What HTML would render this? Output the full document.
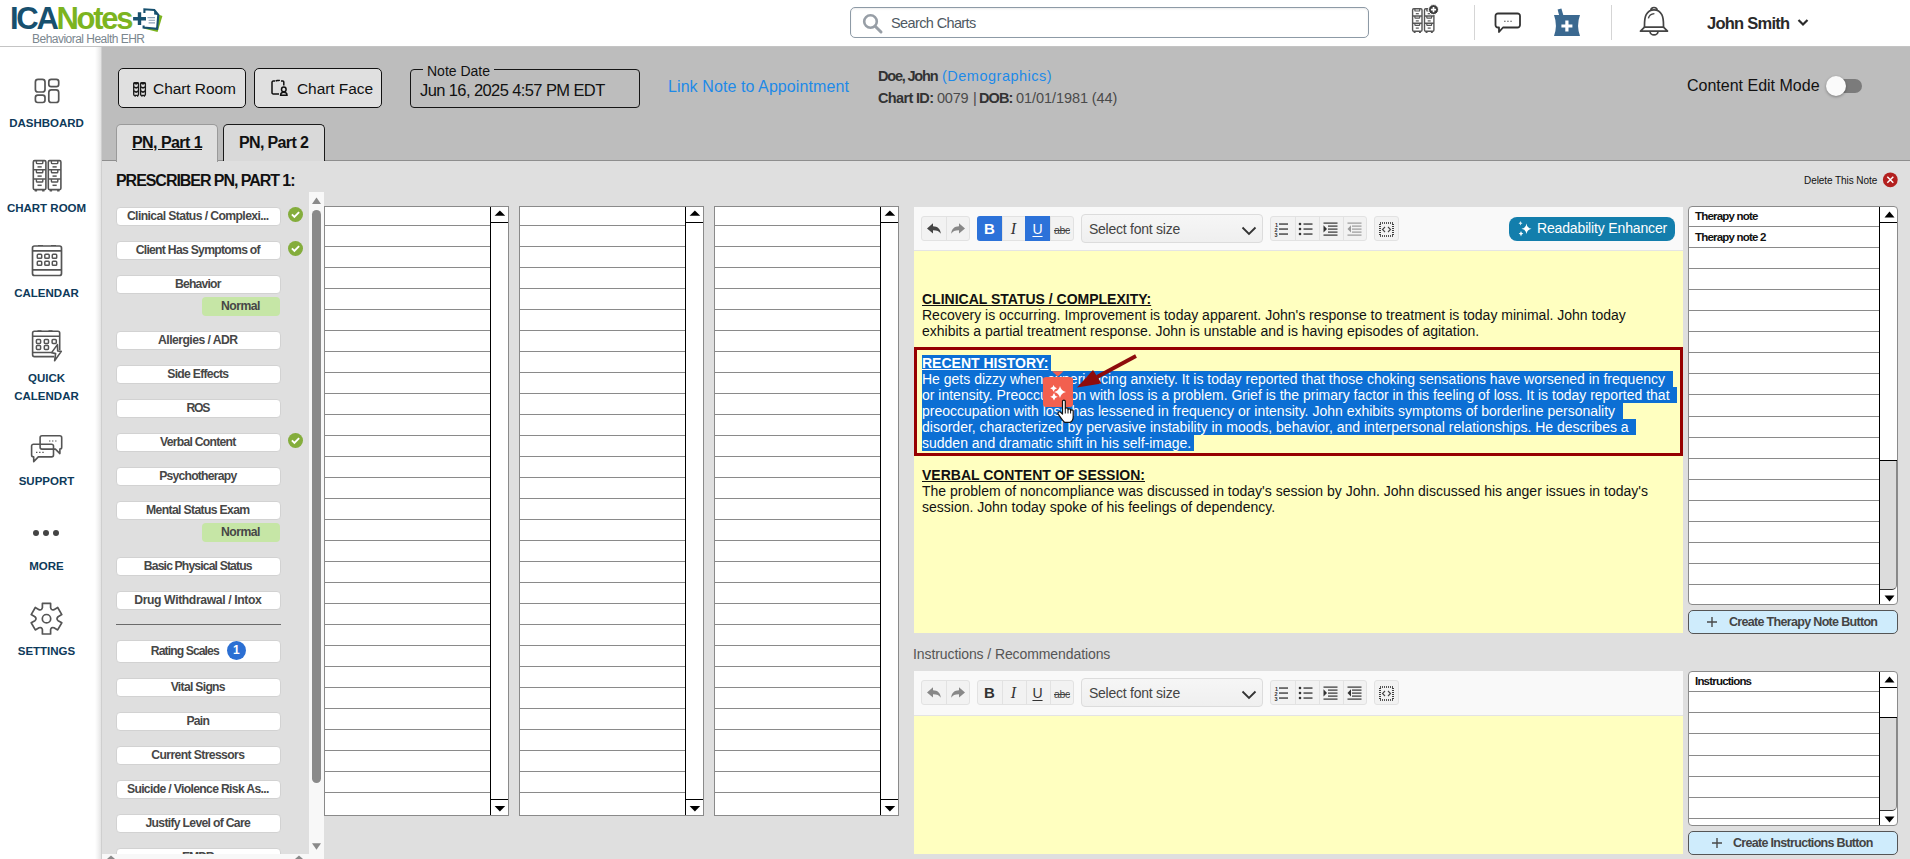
<!DOCTYPE html>
<html><head><meta charset="utf-8">
<style>
*{box-sizing:border-box}
html,body{margin:0;padding:0}
body{width:1910px;height:859px;overflow:hidden;position:relative;background:#dfdfdf;font-family:"Liberation Sans",sans-serif;color:#222}
.a{position:absolute}
.nw{white-space:nowrap}
#hdr{left:0;top:0;width:1910px;height:47px;background:#fff;border-bottom:1px solid #c4c4c4}
#side{left:0;top:47px;width:102px;height:812px;background:linear-gradient(to right,#fff 0,#fff 95px,#f3f3f3 98px,#e4e4e4 101px,#cfcfcf 101px);z-index:3}
#band{left:100px;top:47px;width:1810px;height:114px;background:#bdbdbd;border-bottom:1px solid #8e8e8e}
.navl{left:0;width:93px;text-align:center;font-weight:bold;font-size:11.5px;color:#0e3a5a;line-height:14px}
.li{left:14px;width:165px;background:#fff;border:1px solid #d2d2d2;border-radius:4px}
.lit{font-size:12.2px;font-weight:bold;color:#474747;line-height:15px}
.grid{background:#fff;border:1px solid #8a8a8a}
.tb{background:#f9f9f9}
.grp{background:#f2f2f2;border:1px solid #e2e2e2;border-radius:3px}
.sep{top:0;width:1px;height:23px;background:#e2e2e2}
.sel{background:linear-gradient(#f6f6f6,#efefef);border:1px solid #dcdcdc;border-radius:4px}
.yel{background:#ffffc0}
.etx{font-size:14px;line-height:16px;color:#111}
.hl{background:#0c6fd4;color:#fff}
.rp{background:#fff;border:1px solid #8a8a8a;border-radius:4px}
.cbtn{background:#cfecfc;border:1px solid #555;border-radius:5px}
.cbt{font-size:12.5px;font-weight:bold;color:#444;line-height:15px}
.btn{background:#e0e0e0;border:1.6px solid #111;border-radius:5px}
</style></head><body>

<!-- HEADER -->
<div id="hdr" class="a">
  <div class="a nw" style="left:10px;top:1px;font-weight:bold;font-size:31px;letter-spacing:-2.3px;line-height:36px;"><span style="color:#17506e">ICA</span><span style="color:#7cb41f">Notes</span></div>
  <svg class="a" style="left:130px;top:6px" width="36" height="30" viewBox="130 6 36 30">
    <path d="M143.6 28.4L157.6 32L162.4 16L158.3 14.6Z" fill="#7cb41f"/>
    <path d="M144.6 9.3L154.3 10L158.3 14.9L157.1 28.9L143.6 27.5Z" fill="#fff"/>
    <path d="M144.4 13V9.3L154.3 10L158.3 14.9L157.1 28.9L143.6 27.6V25.6" fill="none" stroke="#17506e" stroke-width="2.1"/>
    <path d="M154.3 10L154.1 14.6L158.3 14.9Z" fill="#17506e"/>
    <path d="M147.5 17.6H155M148.6 20.3H155M148.6 22.9H155" stroke="#8ba0b6" stroke-width="1.1"/>
    <path d="M139.5 12.3V25.1M133.1 18.7H146" stroke="#17506e" stroke-width="3.4"/>
  </svg>
  <div class="a nw" style="left:32px;top:32px;font-size:12px;color:#7b878f;letter-spacing:-.52px">Behavioral Health EHR</div>

  <!-- search -->
  <div class="a" style="left:850px;top:7px;width:519px;height:31px;border:1.5px solid #8d9aa6;border-radius:5px;background:#fff;box-shadow:inset 0 1px 2px rgba(0,0,0,.08)"></div>
  <svg class="a" style="left:862px;top:13px" width="22" height="22" viewBox="0 0 22 22"><circle cx="8.5" cy="8.5" r="6.3" fill="none" stroke="#979ea6" stroke-width="2.6"/><path d="M13.2 13.2 L19 19" stroke="#979ea6" stroke-width="3" stroke-linecap="round"/></svg>
  <div class="a nw" style="left:891px;top:15px;font-size:14.5px;color:#4f5963;letter-spacing:-.62px">Search Charts</div>

  <!-- icons -->
  <!-- chart room + -->
  <svg class="a" style="left:1408px;top:3px" width="34" height="32" viewBox="1408 3 34 32"><g fill="none" stroke="#555" stroke-width="1.4">
    <rect x="1412.6" y="8.8" width="9.4" height="22.4" rx="1.2"/><path d="M1412.6 16H1422.0M1412.6 23.2H1422.0"/><path d="M1414.8999999999999 8.8V10.4A.6 .6 0 0 0 1415.4999999999998 11.0H1419.1000000000001A.6 .6 0 0 0 1419.7 10.4V8.8" stroke-width="1.2"/><path d="M1415.8 13.700000000000001H1418.8" stroke-width="1.2"/><path d="M1414.8999999999999 16V17.6A.6 .6 0 0 0 1415.4999999999998 18.2H1419.1000000000001A.6 .6 0 0 0 1419.7 17.6V16" stroke-width="1.2"/><path d="M1415.8 20.9H1418.8" stroke-width="1.2"/><path d="M1414.8999999999999 23.2V24.8A.6 .6 0 0 0 1415.4999999999998 25.4H1419.1000000000001A.6 .6 0 0 0 1419.7 24.8V23.2" stroke-width="1.2"/><path d="M1415.8 28.1H1418.8" stroke-width="1.2"/><path d="M1413.6999999999998 32.1H1415.6M1419.0 32.1H1420.9" stroke-width="1.6"/><rect x="1424.5" y="8.8" width="9.4" height="22.4" rx="1.2"/><path d="M1424.5 16H1433.9M1424.5 23.2H1433.9"/><path d="M1426.8 8.8V10.4A.6 .6 0 0 0 1427.3999999999999 11.0H1431.0000000000002A.6 .6 0 0 0 1431.6000000000001 10.4V8.8" stroke-width="1.2"/><path d="M1427.7 13.700000000000001H1430.7" stroke-width="1.2"/><path d="M1426.8 16V17.6A.6 .6 0 0 0 1427.3999999999999 18.2H1431.0000000000002A.6 .6 0 0 0 1431.6000000000001 17.6V16" stroke-width="1.2"/><path d="M1427.7 20.9H1430.7" stroke-width="1.2"/><path d="M1426.8 23.2V24.8A.6 .6 0 0 0 1427.3999999999999 25.4H1431.0000000000002A.6 .6 0 0 0 1431.6000000000001 24.8V23.2" stroke-width="1.2"/><path d="M1427.7 28.1H1430.7" stroke-width="1.2"/><path d="M1425.6 32.1H1427.5M1430.9 32.1H1432.8000000000002" stroke-width="1.6"/></g>
    <circle cx="1433.5" cy="9.6" r="5" fill="#3a3a3a" stroke="#fff" stroke-width="1"/>
    <path d="M1433.5 7V12.2M1430.9 9.6H1436.1" stroke="#fff" stroke-width="1.7"/>
  </svg>
  <!-- chat -->
  <svg class="a" style="left:1493.6px;top:12px" width="28" height="22" viewBox="0 0 28 22">
    <path d="M4 1.5H23.5A2.5 2.5 0 0 1 26 4V13A2.5 2.5 0 0 1 23.5 15.5H9L5 20V15.5H4A2.5 2.5 0 0 1 1.5 13V4A2.5 2.5 0 0 1 4 1.5Z" fill="none" stroke="#333" stroke-width="1.8" stroke-linejoin="round"/>
    <path d="M10.2 9.3H11.5M13.3 9.3H14.6M16.4 9.3H17.7" stroke="#333" stroke-width="1.1"/>
  </svg>
  <!-- pharmacy -->
  <svg class="a" style="left:1553px;top:8px" width="28" height="29" viewBox="0 0 28 29">
    <path d="M4.6 1.6L8.4 0.6L10.4 7.5H6.2Z" fill="#3b6990"/>
    <path d="M1 7H27Q23.2 17.5 27 28H1Q4.8 17.5 1 7Z" fill="#3b6990"/>
    <path d="M13.9 12.6V23.4M8.4 18H19.4" stroke="#fff" stroke-width="3.2"/>
  </svg>
  <!-- bell -->
  <svg class="a" style="left:1638px;top:5.5px" width="32" height="31" viewBox="0 0 32 31">
    <g fill="none" stroke="#444" stroke-width="1.7" stroke-linejoin="round">
      <path d="M12.9 4.4A3.1 2.9 0 0 1 19.1 4.4"/>
      <path d="M6.5 21.2C6.5 15 6.3 12 8.2 8.6C10 5.3 13 3.8 16 3.8C19 3.8 22 5.3 23.8 8.6C25.7 12 25.5 15 25.5 21.2"/>
      <path d="M6.5 21.2H25.5L29.5 25.2H2.5Z"/>
      <path d="M12 25.4A4 3.4 0 0 0 20 25.4"/>
      <path d="M10.4 12.3C11 9.4 13.2 7.9 16.4 7.6" stroke-width="1.4"/>
    </g>
  </svg>
  <div class="a" style="left:1474px;top:5px;width:1px;height:35px;background:#d5d5d5"></div>
  <div class="a" style="left:1611px;top:5px;width:1px;height:35px;background:#d5d5d5"></div>
  <div class="a nw" style="left:1707px;top:14px;font-weight:bold;font-size:16.5px;color:#2a2a2a;letter-spacing:-.75px">John Smith</div>
  <svg class="a" style="left:1797px;top:18px" width="12" height="9" viewBox="0 0 12 9"><path d="M1.5 2 L6 6.5 L10.5 2" fill="none" stroke="#2a2a2a" stroke-width="2.2"/></svg>
</div>

<!-- SIDEBAR -->
<div id="side" class="a">
  <!-- dashboard -->
  <svg class="a" style="left:30px;top:27px" width="34" height="32" viewBox="30 74 34 32"><g fill="none" stroke="#555" stroke-width="1.7">
    <rect x="35.4" y="79.3" width="9.6" height="12.7" rx="2.6"/><rect x="35.4" y="95.1" width="9.6" height="7.4" rx="2.4"/>
    <rect x="48.8" y="79.3" width="9.9" height="7.3" rx="2.4"/><rect x="48.8" y="89.9" width="9.9" height="12.6" rx="2.6"/></g></svg>
  <div class="a nav navl nw" style="top:69px">DASHBOARD</div>
  <!-- chart room -->
  <svg class="a" style="left:30px;top:110px" width="34" height="36" viewBox="30 157 34 36"><g fill="none" stroke="#555" stroke-width="1.6">
    <rect x="33.3" y="160.6" width="12.6" height="29" rx="1.3"/><path d="M33.3 169.8H45.9M33.3 179H45.9"/><path d="M36.4 160.6V162.79999999999998A.8 .8 0 0 0 37.199999999999996 163.6H42.0A.8 .8 0 0 0 42.8 162.79999999999998V160.6" stroke-width="1.4"/><path d="M37.5 166.9H41.699999999999996" stroke-width="1.5"/><path d="M36.4 169.8V172.0A.8 .8 0 0 0 37.199999999999996 172.8H42.0A.8 .8 0 0 0 42.8 172.0V169.8" stroke-width="1.4"/><path d="M37.5 176.10000000000002H41.699999999999996" stroke-width="1.5"/><path d="M36.4 179V181.2A.8 .8 0 0 0 37.199999999999996 182H42.0A.8 .8 0 0 0 42.8 181.2V179" stroke-width="1.4"/><path d="M37.5 185.3H41.699999999999996" stroke-width="1.5"/><path d="M34.699999999999996 190.6H37.099999999999994M42.1 190.6H44.5" stroke-width="1.9"/><rect x="48.3" y="160.6" width="12.6" height="29" rx="1.3"/><path d="M48.3 169.8H60.9M48.3 179H60.9"/><path d="M51.4 160.6V162.79999999999998A.8 .8 0 0 0 52.199999999999996 163.6H57.0A.8 .8 0 0 0 57.8 162.79999999999998V160.6" stroke-width="1.4"/><path d="M52.5 166.9H56.699999999999996" stroke-width="1.5"/><path d="M51.4 169.8V172.0A.8 .8 0 0 0 52.199999999999996 172.8H57.0A.8 .8 0 0 0 57.8 172.0V169.8" stroke-width="1.4"/><path d="M52.5 176.10000000000002H56.699999999999996" stroke-width="1.5"/><path d="M51.4 179V181.2A.8 .8 0 0 0 52.199999999999996 182H57.0A.8 .8 0 0 0 57.8 181.2V179" stroke-width="1.4"/><path d="M52.5 185.3H56.699999999999996" stroke-width="1.5"/><path d="M49.699999999999996 190.6H52.099999999999994M57.1 190.6H59.5" stroke-width="1.9"/></g></svg>
  <div class="a nav navl nw" style="top:153.5px">CHART ROOM</div>
  <!-- calendar -->
  <svg class="a" style="left:30px;top:197px" width="34" height="34" viewBox="0 0 34 34"><g fill="none" stroke="#555" stroke-width="1.7">
    <rect x="2.5" y="2" width="29" height="29.5" rx="2"/><path d="M2.5 6.8H31.5M2.5 25.8H31.5"/>
    <path d="M8 1.5H13M21 1.5H26" stroke-width="1.2"/>
    <rect x="7.3" y="10.3" width="4.4" height="4" rx=".9" stroke-width="1.5"/><rect x="14.8" y="10.3" width="4.4" height="4" rx=".9" stroke-width="1.5"/><rect x="22.3" y="10.3" width="4.4" height="4" rx=".9" stroke-width="1.5"/>
    <rect x="7.3" y="17.3" width="4.4" height="4" rx=".9" stroke-width="1.5"/><rect x="14.8" y="17.3" width="4.4" height="4" rx=".9" stroke-width="1.5"/><rect x="22.3" y="17.3" width="4.4" height="4" rx=".9" stroke-width="1.5"/></g></svg>
  <div class="a nav navl nw" style="top:239px">CALENDAR</div>
  <!-- quick calendar -->
  <svg class="a" style="left:29px;top:281px" width="36" height="36" viewBox="29 328 36 36"><g fill="none" stroke="#555" stroke-width="1.6" stroke-linejoin="round">
    <path d="M54.2 356.6H34.4A1.8 1.8 0 0 1 32.6 354.8V333.1A1.8 1.8 0 0 1 34.4 331.3H57.9A1.8 1.8 0 0 1 59.7 333.1V350.3"/>
    <path d="M32.6 336.3H59.7M32.6 352.5H51.5"/>
    <path d="M37.5 330.9H41.5M48.5 330.9H52.5" stroke-width="1.2"/>
    <rect x="36.4" y="339.6" width="4.2" height="3.8" rx=".9" stroke-width="1.5"/><rect x="44.3" y="339.6" width="4.2" height="3.8" rx=".9" stroke-width="1.5"/><rect x="52.1" y="339.6" width="4.2" height="3.8" rx=".9" stroke-width="1.5"/><rect x="36.4" y="345.6" width="4.2" height="3.8" rx=".9" stroke-width="1.5"/><rect x="44.3" y="345.6" width="4.2" height="3.8" rx=".9" stroke-width="1.5"/>
    <path d="M57.4 344.6L51.6 352.6L55.6 353.6L54.6 360.8L61.3 351.4L57.7 351Z" fill="#fff"/></g></svg>
  <div class="a nav navl nw" style="top:324px">QUICK</div>
  <div class="a nav navl nw" style="top:341.5px">CALENDAR</div>
  <!-- support -->
  <svg class="a" style="left:28px;top:384px" width="38" height="34" viewBox="28 431 38 34"><g fill="none" stroke="#555" stroke-width="1.6" stroke-linejoin="round">
    <path d="M42 435.8H59.8A1.9 1.9 0 0 1 61.7 437.7V447.2A1.9 1.9 0 0 1 59.8 449.1H59.9V453.6L55.4 449.1H42A1.9 1.9 0 0 1 40.1 447.2V437.7A1.9 1.9 0 0 1 42 435.8Z"/>
    <path d="M33.5 444.2H51.6A1.9 1.9 0 0 1 53.5 446.1V455A1.9 1.9 0 0 1 51.6 456.9H38.3L33.7 461.6V456.9H33.5A1.9 1.9 0 0 1 31.6 455V446.1A1.9 1.9 0 0 1 33.5 444.2Z"/>
    <path d="M49 441H50.4M52 441H53.4M55.1 441H56.5M36 452.4H37.4M39.1 452.4H40.5M42.3 452.4H43.7" stroke-width="1.2"/></g></svg>
  <div class="a nav navl nw" style="top:427px">SUPPORT</div>
  <!-- more -->
  <svg class="a" style="left:32px;top:482px" width="30" height="8" viewBox="0 0 30 8"><circle cx="4" cy="4" r="3" fill="#444"/><circle cx="14" cy="4" r="3" fill="#444"/><circle cx="24" cy="4" r="3" fill="#444"/></svg>
  <div class="a nav navl nw" style="top:511.5px">MORE</div>
  <!-- settings -->
  <svg class="a" style="left:28px;top:553px" width="38" height="38" viewBox="28 600 38 38"><g fill="none" stroke="#555" stroke-width="1.7" stroke-linejoin="round">
    <path d="M42.40 607.70L42.40 603.40L50.60 603.40L50.60 607.70Q51.20 610.56 53.98 609.65L57.70 607.50L61.80 614.60L58.08 616.75Q55.90 618.70 58.08 620.65L61.80 622.80L57.70 629.90L53.98 627.75Q51.20 626.84 50.60 629.70L50.60 634.00L42.40 634.00L42.40 629.70Q41.80 626.84 39.02 627.75L35.30 629.90L31.20 622.80L34.92 620.65Q37.10 618.70 34.92 616.75L31.20 614.60L35.30 607.50L39.02 609.65Q41.80 610.56 42.40 607.70Z"/><circle cx="46.5" cy="618.7" r="4.2"/></g></svg>
  <div class="a nav navl nw" style="top:596.5px">SETTINGS</div>
</div>

<!-- GRAY BAND -->
<div id="band" class="a"></div>
<!-- toolbar buttons -->
<div class="a btn" style="left:118px;top:68px;width:128px;height:40px"></div>
<svg class="a" style="left:132px;top:81px" width="16" height="16" viewBox="132 81 16 16"><g fill="none" stroke="#1a1a1a">
  <rect x="133.7" y="82.6" width="4.8" height="12.8" rx="1" stroke-width="1.3"/><rect x="140.6" y="82.6" width="4.8" height="12.8" rx="1" stroke-width="1.3"/>
  <path d="M133.7 82.8L136.1 84L138.5 82.8M133.7 86.8L136.1 88L138.5 86.8M133.7 91L136.1 92.2L138.5 91M140.6 82.8L143 84L145.4 82.8M140.6 86.8L143 88L145.4 86.8M140.6 91L143 92.2L145.4 91" stroke-width="1.5"/>
  <path d="M134.5 96H135.8M137 96H138.2M141.3 96H142.5M143.7 96H145" stroke-width="1.4"/></g></svg>
<div class="a nw" style="left:153px;top:80px;font-size:15.5px;color:#111;letter-spacing:-.06px">Chart Room</div>
<div class="a btn" style="left:254px;top:68px;width:128px;height:40px"></div>
<svg class="a" style="left:270px;top:79px" width="19" height="19" viewBox="270 79 19 19"><g fill="none" stroke="#111" stroke-width="1.5">
  <path d="M279 93.9H273.2A1.2 1.2 0 0 1 272 92.7V82.3A1.2 1.2 0 0 1 273.2 81.1H275"/>
  <path d="M275.6 81.1L277.2 80.5H279.2L279.4 81.1" stroke-width="1.6"/>
  <path d="M281 81.1H282.8A1 1 0 0 1 283.8 82.1V85.6"/>
  <circle cx="283.8" cy="89.4" r="2.3"/>
  <path d="M280.6 95.3C280.6 93.2 281.8 92.3 283.8 92.3C285.8 92.3 287 93.2 287 95.3Z"/></g></svg>
<div class="a nw" style="left:297px;top:80px;font-size:15.5px;color:#111;letter-spacing:-.07px">Chart Face</div>

<!-- note date -->
<div class="a" style="left:410px;top:69px;width:230px;height:39px;border:1.5px solid #161616;border-radius:4px"></div>
<div class="a nw" style="left:423px;top:63px;padding:0 4px;background:#bdbdbd;font-size:14px;color:#111;line-height:16px;letter-spacing:0px">Note Date</div>
<div class="a nw" style="left:420px;top:81px;font-size:16.5px;color:#111;letter-spacing:-.6px">Jun 16, 2025 4:57 PM EDT</div>

<div class="a nw" style="left:668px;top:78px;font-size:16px;color:#1d8ae8;letter-spacing:.09px">Link Note to Appointment</div>

<div class="a nw" style="left:878px;top:68px;font-size:14.5px;line-height:17px;color:#333;font-weight:bold;letter-spacing:-1.2px">Doe, John</div>
<div class="a nw" style="left:942px;top:68px;font-size:14.5px;line-height:17px;color:#1d8ae8;letter-spacing:.5px">(Demographics)</div>
<div class="a nw" style="left:878px;top:90px;font-size:14.5px;line-height:17px;color:#333;font-weight:bold;letter-spacing:-.65px">Chart ID:</div>
<div class="a nw" style="left:937px;top:90px;font-size:14.5px;line-height:17px;color:#4a4a4a;letter-spacing:-.2px">0079</div>
<div class="a nw" style="left:973px;top:90px;font-size:14.5px;line-height:17px;color:#4a4a4a">|</div>
<div class="a nw" style="left:979px;top:90px;font-size:14.5px;line-height:17px;color:#333;font-weight:bold;letter-spacing:-.9px">DOB:</div>
<div class="a nw" style="left:1016px;top:90px;font-size:14.5px;line-height:17px;color:#4a4a4a;letter-spacing:-.07px">01/01/1981 (44)</div>

<div class="a nw" style="left:1687px;top:77px;font-size:16px;color:#111">Content Edit Mode</div>
<div class="a" style="left:1828px;top:79px;width:34px;height:14px;border-radius:7px;background:#7b7b7b"></div>
<div class="a" style="left:1826px;top:75.5px;width:20px;height:20px;border-radius:50%;background:#fafafa;box-shadow:0 1px 3px rgba(0,0,0,.35)"></div>

<!-- tabs -->
<div class="a" style="left:116px;top:124px;width:102px;height:38px;background:#dfdfdf;border:1px solid #9a9a9a;border-bottom:none;border-radius:5px 5px 0 0"></div>
<div class="a nw" style="left:132px;top:134px;font-size:16px;font-weight:bold;color:#111;text-decoration:underline;letter-spacing:-.56px">PN, Part 1</div>
<div class="a" style="left:223px;top:124px;width:102px;height:37px;background:#d9d9d9;border:1.5px solid #1a1a1a;border-bottom:none;border-radius:5px 5px 0 0"></div>
<div class="a nw" style="left:239px;top:134px;font-size:16px;font-weight:bold;color:#111;letter-spacing:-.64px">PN, Part 2</div>

<div class="a nw" style="left:116px;top:172px;font-size:16px;font-weight:bold;color:#111;letter-spacing:-1.05px">PRESCRIBER PN, PART 1:</div>
<div class="a nw" style="left:1804px;top:175px;font-size:10px;line-height:12px;color:#111;letter-spacing:-.07px">Delete This Note</div>
<svg class="a" style="left:1882px;top:172px" width="16" height="16" viewBox="0 0 16 16"><circle cx="8.3" cy="7.8" r="7.4" fill="#b3201f"/><path d="M5.3 4.8L11.3 10.8M11.3 4.8L5.3 10.8" stroke="#fff" stroke-width="1.5"/></svg>


<!--LIST-->
<div class="a" style="left:102px;top:161px;width:207px;height:693px;overflow:hidden">
<div class="a li" style="top:46px;height:19px"></div>
<div class="a nw lit" style="left:13.8px;width:164px;top:48px;text-align:center;letter-spacing:-0.601px">Clinical Status / Complexi...</div>
<svg class="a" style="left:186px;top:45.5px" width="15" height="15" viewBox="0 0 15 15"><circle cx="7.5" cy="7.5" r="7.5" fill="#84ad3c"/><path d="M3.9 7.4L6.4 9.9L11.1 5.2" fill="none" stroke="#fff" stroke-width="1.9"/></svg>
<div class="a li" style="top:80px;height:19px"></div>
<div class="a nw lit" style="left:13.8px;width:164px;top:82px;text-align:center;letter-spacing:-0.724px">Client Has Symptoms of</div>
<svg class="a" style="left:186px;top:79.5px" width="15" height="15" viewBox="0 0 15 15"><circle cx="7.5" cy="7.5" r="7.5" fill="#84ad3c"/><path d="M3.9 7.4L6.4 9.9L11.1 5.2" fill="none" stroke="#fff" stroke-width="1.9"/></svg>
<div class="a li" style="top:114px;height:19px"></div>
<div class="a nw lit" style="left:13.8px;width:164px;top:116px;text-align:center;letter-spacing:-0.801px">Behavior</div>
<div class="a" style="left:100px;top:136px;width:78px;height:19px;background:#c6e6a6;border-radius:4px"></div>
<div class="a nw lit" style="left:99px;width:79px;top:138px;text-align:center;letter-spacing:-0.505px">Normal</div>
<div class="a li" style="top:170px;height:19px"></div>
<div class="a nw lit" style="left:13.8px;width:164px;top:172px;text-align:center;letter-spacing:-0.539px">Allergies / ADR</div>
<div class="a li" style="top:204px;height:19px"></div>
<div class="a nw lit" style="left:13.8px;width:164px;top:206px;text-align:center;letter-spacing:-0.720px">Side Effects</div>
<div class="a li" style="top:238px;height:19px"></div>
<div class="a nw lit" style="left:13.8px;width:164px;top:240px;text-align:center;letter-spacing:-1.312px">ROS</div>
<div class="a li" style="top:272px;height:19px"></div>
<div class="a nw lit" style="left:13.8px;width:164px;top:274px;text-align:center;letter-spacing:-0.738px">Verbal Content</div>
<svg class="a" style="left:186px;top:271.5px" width="15" height="15" viewBox="0 0 15 15"><circle cx="7.5" cy="7.5" r="7.5" fill="#84ad3c"/><path d="M3.9 7.4L6.4 9.9L11.1 5.2" fill="none" stroke="#fff" stroke-width="1.9"/></svg>
<div class="a li" style="top:306px;height:19px"></div>
<div class="a nw lit" style="left:13.8px;width:164px;top:308px;text-align:center;letter-spacing:-0.774px">Psychotherapy</div>
<div class="a li" style="top:340px;height:19px"></div>
<div class="a nw lit" style="left:13.8px;width:164px;top:342px;text-align:center;letter-spacing:-0.648px">Mental Status Exam</div>
<div class="a" style="left:100px;top:362px;width:78px;height:19px;background:#c6e6a6;border-radius:4px"></div>
<div class="a nw lit" style="left:99px;width:79px;top:364px;text-align:center;letter-spacing:-0.505px">Normal</div>
<div class="a li" style="top:396px;height:19px"></div>
<div class="a nw lit" style="left:13.8px;width:164px;top:398px;text-align:center;letter-spacing:-0.863px">Basic Physical Status</div>
<div class="a li" style="top:430px;height:19px"></div>
<div class="a nw lit" style="left:13.8px;width:164px;top:432px;text-align:center;letter-spacing:-0.384px">Drug Withdrawal / Intox</div>
<div class="a li" style="top:479px;height:23px"></div>
<div class="a nw lit" style="left:48.80000000000001px;top:483px;letter-spacing:-0.916px">Rating Scales</div>
<div class="a" style="left:124.9px;top:480px;width:19px;height:19px;border-radius:50%;background:#2b6fd3;color:#fff;font-weight:bold;font-size:12px;line-height:19px;text-align:center">1</div>
<div class="a li" style="top:517px;height:19px"></div>
<div class="a nw lit" style="left:13.8px;width:164px;top:519px;text-align:center;letter-spacing:-0.714px">Vital Signs</div>
<div class="a li" style="top:551px;height:19px"></div>
<div class="a nw lit" style="left:13.8px;width:164px;top:553px;text-align:center;letter-spacing:-0.773px">Pain</div>
<div class="a li" style="top:585px;height:19px"></div>
<div class="a nw lit" style="left:13.8px;width:164px;top:587px;text-align:center;letter-spacing:-0.620px">Current Stressors</div>
<div class="a li" style="top:619px;height:19px"></div>
<div class="a nw lit" style="left:13.8px;width:164px;top:621px;text-align:center;letter-spacing:-0.672px">Suicide / Violence Risk As...</div>
<div class="a li" style="top:653px;height:19px"></div>
<div class="a nw lit" style="left:13.8px;width:164px;top:655px;text-align:center;letter-spacing:-0.697px">Justify Level of Care</div>
<div class="a li" style="top:687px;height:19px"></div>
<div class="a nw lit" style="left:13.8px;width:164px;top:689px;text-align:center;letter-spacing:-1.078px">EMDR</div>
<div class="a" style="left:14px;top:463px;width:165px;height:1px;background:#6a6a6a"></div>
</div>
<div class="a" style="left:309px;top:192px;width:15px;height:667px;background:#f8f8f8"></div>
<svg class="a" style="left:311px;top:196px" width="11" height="9" viewBox="0 0 11 9"><path d="M1 8L5.5 1.5L10 8Z" fill="#8a8a8a"/></svg>
<div class="a" style="left:312px;top:210px;width:9px;height:573px;border-radius:5px;background:#8a8a8a"></div>
<svg class="a" style="left:311px;top:842px" width="11" height="9" viewBox="0 0 11 9"><path d="M1 1.2L5.5 7.8L10 1.2Z" fill="#8a8a8a"/></svg>
<div class="a" style="left:102px;top:854px;width:207px;height:5px;background:#f8f8f8"></div>
<svg class="a" style="left:106px;top:855px" width="10" height="4" viewBox="0 0 10 4"><path d="M1 4L5 0.5L9 4Z" fill="#8a8a8a"/></svg>
<svg class="a" style="left:294px;top:855px" width="10" height="4" viewBox="0 0 10 4"><path d="M1 4L5 0.5L9 4Z" fill="#8a8a8a"/></svg>
<!--/LIST-->
<!--MAIN-->
<div class="a grid" style="left:324px;top:206px;width:185px;height:610px">
<div class="a" style="left:0;top:18px;width:166px;height:1px;background:#8a8a8a"></div>
<div class="a" style="left:0;top:39px;width:166px;height:1px;background:#8a8a8a"></div>
<div class="a" style="left:0;top:60px;width:166px;height:1px;background:#8a8a8a"></div>
<div class="a" style="left:0;top:81px;width:166px;height:1px;background:#8a8a8a"></div>
<div class="a" style="left:0;top:102px;width:166px;height:1px;background:#8a8a8a"></div>
<div class="a" style="left:0;top:123px;width:166px;height:1px;background:#8a8a8a"></div>
<div class="a" style="left:0;top:144px;width:166px;height:1px;background:#8a8a8a"></div>
<div class="a" style="left:0;top:165px;width:166px;height:1px;background:#8a8a8a"></div>
<div class="a" style="left:0;top:186px;width:166px;height:1px;background:#8a8a8a"></div>
<div class="a" style="left:0;top:207px;width:166px;height:1px;background:#8a8a8a"></div>
<div class="a" style="left:0;top:228px;width:166px;height:1px;background:#8a8a8a"></div>
<div class="a" style="left:0;top:249px;width:166px;height:1px;background:#8a8a8a"></div>
<div class="a" style="left:0;top:270px;width:166px;height:1px;background:#8a8a8a"></div>
<div class="a" style="left:0;top:291px;width:166px;height:1px;background:#8a8a8a"></div>
<div class="a" style="left:0;top:312px;width:166px;height:1px;background:#8a8a8a"></div>
<div class="a" style="left:0;top:333px;width:166px;height:1px;background:#8a8a8a"></div>
<div class="a" style="left:0;top:354px;width:166px;height:1px;background:#8a8a8a"></div>
<div class="a" style="left:0;top:375px;width:166px;height:1px;background:#8a8a8a"></div>
<div class="a" style="left:0;top:396px;width:166px;height:1px;background:#8a8a8a"></div>
<div class="a" style="left:0;top:417px;width:166px;height:1px;background:#8a8a8a"></div>
<div class="a" style="left:0;top:438px;width:166px;height:1px;background:#8a8a8a"></div>
<div class="a" style="left:0;top:459px;width:166px;height:1px;background:#8a8a8a"></div>
<div class="a" style="left:0;top:480px;width:166px;height:1px;background:#8a8a8a"></div>
<div class="a" style="left:0;top:501px;width:166px;height:1px;background:#8a8a8a"></div>
<div class="a" style="left:0;top:522px;width:166px;height:1px;background:#8a8a8a"></div>
<div class="a" style="left:0;top:543px;width:166px;height:1px;background:#8a8a8a"></div>
<div class="a" style="left:0;top:564px;width:166px;height:1px;background:#8a8a8a"></div>
<div class="a" style="left:0;top:585px;width:166px;height:1px;background:#8a8a8a"></div>
<div class="a" style="left:165px;top:0;width:1.4px;height:608px;background:#000"></div>
<div class="a" style="left:166px;top:15px;width:17px;height:1.4px;background:#000"></div>
<div class="a" style="left:166px;top:592px;width:17px;height:1.4px;background:#000"></div>
<svg class="a" style="left:169px;top:2px" width="13" height="8" viewBox="0 0 13 8"><path d="M0.6 6.8L5.9 1.5L11.2 6.8Z" fill="#000"/></svg>
<svg class="a" style="left:169px;top:598px" width="13" height="8" viewBox="0 0 13 8"><path d="M0.6 1L5.9 6.5L11.2 1Z" fill="#000"/></svg>
</div>
<div class="a grid" style="left:519px;top:206px;width:185px;height:610px">
<div class="a" style="left:0;top:18px;width:166px;height:1px;background:#8a8a8a"></div>
<div class="a" style="left:0;top:39px;width:166px;height:1px;background:#8a8a8a"></div>
<div class="a" style="left:0;top:60px;width:166px;height:1px;background:#8a8a8a"></div>
<div class="a" style="left:0;top:81px;width:166px;height:1px;background:#8a8a8a"></div>
<div class="a" style="left:0;top:102px;width:166px;height:1px;background:#8a8a8a"></div>
<div class="a" style="left:0;top:123px;width:166px;height:1px;background:#8a8a8a"></div>
<div class="a" style="left:0;top:144px;width:166px;height:1px;background:#8a8a8a"></div>
<div class="a" style="left:0;top:165px;width:166px;height:1px;background:#8a8a8a"></div>
<div class="a" style="left:0;top:186px;width:166px;height:1px;background:#8a8a8a"></div>
<div class="a" style="left:0;top:207px;width:166px;height:1px;background:#8a8a8a"></div>
<div class="a" style="left:0;top:228px;width:166px;height:1px;background:#8a8a8a"></div>
<div class="a" style="left:0;top:249px;width:166px;height:1px;background:#8a8a8a"></div>
<div class="a" style="left:0;top:270px;width:166px;height:1px;background:#8a8a8a"></div>
<div class="a" style="left:0;top:291px;width:166px;height:1px;background:#8a8a8a"></div>
<div class="a" style="left:0;top:312px;width:166px;height:1px;background:#8a8a8a"></div>
<div class="a" style="left:0;top:333px;width:166px;height:1px;background:#8a8a8a"></div>
<div class="a" style="left:0;top:354px;width:166px;height:1px;background:#8a8a8a"></div>
<div class="a" style="left:0;top:375px;width:166px;height:1px;background:#8a8a8a"></div>
<div class="a" style="left:0;top:396px;width:166px;height:1px;background:#8a8a8a"></div>
<div class="a" style="left:0;top:417px;width:166px;height:1px;background:#8a8a8a"></div>
<div class="a" style="left:0;top:438px;width:166px;height:1px;background:#8a8a8a"></div>
<div class="a" style="left:0;top:459px;width:166px;height:1px;background:#8a8a8a"></div>
<div class="a" style="left:0;top:480px;width:166px;height:1px;background:#8a8a8a"></div>
<div class="a" style="left:0;top:501px;width:166px;height:1px;background:#8a8a8a"></div>
<div class="a" style="left:0;top:522px;width:166px;height:1px;background:#8a8a8a"></div>
<div class="a" style="left:0;top:543px;width:166px;height:1px;background:#8a8a8a"></div>
<div class="a" style="left:0;top:564px;width:166px;height:1px;background:#8a8a8a"></div>
<div class="a" style="left:0;top:585px;width:166px;height:1px;background:#8a8a8a"></div>
<div class="a" style="left:165px;top:0;width:1.4px;height:608px;background:#000"></div>
<div class="a" style="left:166px;top:15px;width:17px;height:1.4px;background:#000"></div>
<div class="a" style="left:166px;top:592px;width:17px;height:1.4px;background:#000"></div>
<svg class="a" style="left:169px;top:2px" width="13" height="8" viewBox="0 0 13 8"><path d="M0.6 6.8L5.9 1.5L11.2 6.8Z" fill="#000"/></svg>
<svg class="a" style="left:169px;top:598px" width="13" height="8" viewBox="0 0 13 8"><path d="M0.6 1L5.9 6.5L11.2 1Z" fill="#000"/></svg>
</div>
<div class="a grid" style="left:714px;top:206px;width:185px;height:610px">
<div class="a" style="left:0;top:18px;width:166px;height:1px;background:#8a8a8a"></div>
<div class="a" style="left:0;top:39px;width:166px;height:1px;background:#8a8a8a"></div>
<div class="a" style="left:0;top:60px;width:166px;height:1px;background:#8a8a8a"></div>
<div class="a" style="left:0;top:81px;width:166px;height:1px;background:#8a8a8a"></div>
<div class="a" style="left:0;top:102px;width:166px;height:1px;background:#8a8a8a"></div>
<div class="a" style="left:0;top:123px;width:166px;height:1px;background:#8a8a8a"></div>
<div class="a" style="left:0;top:144px;width:166px;height:1px;background:#8a8a8a"></div>
<div class="a" style="left:0;top:165px;width:166px;height:1px;background:#8a8a8a"></div>
<div class="a" style="left:0;top:186px;width:166px;height:1px;background:#8a8a8a"></div>
<div class="a" style="left:0;top:207px;width:166px;height:1px;background:#8a8a8a"></div>
<div class="a" style="left:0;top:228px;width:166px;height:1px;background:#8a8a8a"></div>
<div class="a" style="left:0;top:249px;width:166px;height:1px;background:#8a8a8a"></div>
<div class="a" style="left:0;top:270px;width:166px;height:1px;background:#8a8a8a"></div>
<div class="a" style="left:0;top:291px;width:166px;height:1px;background:#8a8a8a"></div>
<div class="a" style="left:0;top:312px;width:166px;height:1px;background:#8a8a8a"></div>
<div class="a" style="left:0;top:333px;width:166px;height:1px;background:#8a8a8a"></div>
<div class="a" style="left:0;top:354px;width:166px;height:1px;background:#8a8a8a"></div>
<div class="a" style="left:0;top:375px;width:166px;height:1px;background:#8a8a8a"></div>
<div class="a" style="left:0;top:396px;width:166px;height:1px;background:#8a8a8a"></div>
<div class="a" style="left:0;top:417px;width:166px;height:1px;background:#8a8a8a"></div>
<div class="a" style="left:0;top:438px;width:166px;height:1px;background:#8a8a8a"></div>
<div class="a" style="left:0;top:459px;width:166px;height:1px;background:#8a8a8a"></div>
<div class="a" style="left:0;top:480px;width:166px;height:1px;background:#8a8a8a"></div>
<div class="a" style="left:0;top:501px;width:166px;height:1px;background:#8a8a8a"></div>
<div class="a" style="left:0;top:522px;width:166px;height:1px;background:#8a8a8a"></div>
<div class="a" style="left:0;top:543px;width:166px;height:1px;background:#8a8a8a"></div>
<div class="a" style="left:0;top:564px;width:166px;height:1px;background:#8a8a8a"></div>
<div class="a" style="left:0;top:585px;width:166px;height:1px;background:#8a8a8a"></div>
<div class="a" style="left:165px;top:0;width:1.4px;height:608px;background:#000"></div>
<div class="a" style="left:166px;top:15px;width:17px;height:1.4px;background:#000"></div>
<div class="a" style="left:166px;top:592px;width:17px;height:1.4px;background:#000"></div>
<svg class="a" style="left:169px;top:2px" width="13" height="8" viewBox="0 0 13 8"><path d="M0.6 6.8L5.9 1.5L11.2 6.8Z" fill="#000"/></svg>
<svg class="a" style="left:169px;top:598px" width="13" height="8" viewBox="0 0 13 8"><path d="M0.6 1L5.9 6.5L11.2 1Z" fill="#000"/></svg>
</div>
<div class="a tb" style="left:914px;top:207px;width:769px;height:44px"></div>
<div class="a grp" style="left:921px;top:216px;width:49px;height:25px"><div class="a sep" style="left:24px"></div></div>
<svg class="a" style="left:925px;top:221px" width="18" height="16" viewBox="0 0 18 16"><path d="M2 7.5L8 2.2V5.3C12.5 5.3 15.5 8 15.8 12.8C14.3 10.4 12.2 9.3 8 9.3V12.6Z" fill="#444"/></svg>
<svg class="a" style="left:949px;top:221px" width="18" height="16" viewBox="0 0 18 16"><path d="M16 7.5L10 2.2V5.3C5.5 5.3 2.5 8 2.2 12.8C3.7 10.4 5.8 9.3 10 9.3V12.6Z" fill="#888"/></svg>
<div class="a grp" style="left:977px;top:216px;width:97px;height:25px">
<div class="a sep" style="left:24px"></div>
<div class="a sep" style="left:48px"></div>
<div class="a sep" style="left:72px"></div>
</div>
<div class="a" style="left:977px;top:216px;width:25px;height:25px;background:#2c72d9;border-radius:3px 0 0 3px"></div>
<div class="a" style="left:1025px;top:216px;width:25px;height:25px;background:#2c72d9"></div>
<div class="a nw" style="left:977px;width:25px;top:221px;text-align:center;font-weight:bold;font-size:15px;line-height:16px;color:#fff">B</div>
<div class="a nw" style="left:1002px;width:23px;top:221px;text-align:center;font-family:'Liberation Serif',serif;font-style:italic;font-size:16px;line-height:16px;color:#333">I</div>
<div class="a nw" style="left:1025px;width:25px;top:221px;text-align:center;font-size:14px;line-height:16px;color:#fff;text-decoration:underline;text-underline-offset:1.5px">U</div>
<div class="a nw" style="left:1050px;width:24px;top:224px;text-align:center;font-size:10.5px;line-height:12px;color:#444;text-decoration:line-through;letter-spacing:-.3px">abc</div>
<div class="a sel" style="left:1081px;top:214px;width:182px;height:29px"></div>
<div class="a nw" style="left:1089px;top:221px;font-size:14px;line-height:16px;color:#444;letter-spacing:-.25px">Select font size</div>
<svg class="a" style="left:1241px;top:226px" width="16" height="10" viewBox="0 0 16 10"><path d="M1.5 1.5L8 8L14.5 1.5" fill="none" stroke="#333" stroke-width="1.8"/></svg>
<div class="a grp" style="left:1270px;top:216px;width:97px;height:25px">
<div class="a sep" style="left:24px"></div>
<div class="a sep" style="left:48px"></div>
<div class="a sep" style="left:72px"></div>
</div>
<svg class="a" style="left:1274px;top:221px" width="17" height="17" viewBox="0 0 17 17"><g fill="#333"><rect x="5" y="2.4" width="9" height="1.3"/><rect x="5" y="7.4" width="9" height="1.3"/><rect x="5" y="12.4" width="9" height="1.3"/></g><text x="1" y="5.5" font-size="5.5" font-family="Liberation Sans" font-weight="bold" fill="#333">1</text><text x="0.6" y="10.5" font-size="5.5" font-family="Liberation Sans" font-weight="bold" fill="#333">2</text><text x="0.6" y="15.5" font-size="5.5" font-family="Liberation Sans" font-weight="bold" fill="#333">3</text></svg>
<svg class="a" style="left:1298px;top:221px" width="17" height="17" viewBox="0 0 17 17"><g fill="#333"><rect x="5.5" y="2.4" width="9" height="1.3"/><rect x="5.5" y="7.4" width="9" height="1.3"/><rect x="5.5" y="12.4" width="9" height="1.3"/><circle cx="2" cy="3" r="1.3"/><circle cx="2" cy="8" r="1.3"/><circle cx="2" cy="13" r="1.3"/></g></svg>
<svg class="a" style="left:1322px;top:221px" width="17" height="17" viewBox="0 0 17 17"><g fill="#333"><rect x="1.5" y="1.5" width="14" height="1.2"/><rect x="6" y="4.5" width="9.5" height="1.2"/><rect x="6" y="7.5" width="9.5" height="1.2"/><rect x="6" y="10.5" width="9.5" height="1.2"/><rect x="1.5" y="13.5" width="14" height="1.2"/><path d="M1.5 4.3L5 8L1.5 11.5Z"/></g></svg>
<svg class="a" style="left:1346px;top:221px" width="17" height="17" viewBox="0 0 17 17"><g fill="#999"><rect x="1.5" y="1.5" width="14" height="1.2"/><rect x="6" y="4.5" width="9.5" height="1.2"/><rect x="6" y="7.5" width="9.5" height="1.2"/><rect x="6" y="10.5" width="9.5" height="1.2"/><rect x="1.5" y="13.5" width="14" height="1.2"/><path d="M5 4.3L1.5 8L5 11.5Z"/></g></svg>
<div class="a grp" style="left:1374px;top:216px;width:25px;height:25px"></div>
<svg class="a" style="left:1378px;top:221px" width="17" height="17" viewBox="0 0 17 17"><rect x="2" y="2" width="13" height="13" fill="none" stroke="#222" stroke-width="1.7" stroke-dasharray="1 1"/><path d="M7 6L4.5 8.5L7 11M10 6L12.5 8.5L10 11" fill="none" stroke="#444" stroke-width="1.1"/></svg>
<div class="a" style="left:914px;top:250px;width:769px;height:1px;background:#e4e4e4"></div>
<div class="a yel" style="left:914px;top:251px;width:769px;height:382px"></div>
<div class="a" style="left:1509px;top:217px;width:166px;height:24px;border-radius:8px;background:#137eac"></div>
<svg class="a" style="left:1516px;top:220px" width="18" height="18" viewBox="0 0 18 18"><g fill="#fff"><path d="M10.5 3.5Q11 8 15.5 8.8Q11 9.6 10.5 14Q10 9.6 5.5 8.8Q10 8 10.5 3.5Z"/><path d="M4.5 1Q4.8 3 6.5 3.3Q4.8 3.6 4.5 5.5Q4.2 3.6 2.5 3.3Q4.2 3 4.5 1Z" opacity=".85"/><path d="M5 11Q5.3 13.2 7.3 13.6Q5.3 14 5 16.5Q4.7 14 2.7 13.6Q4.7 13.2 5 11Z"/></g></svg>
<div class="a nw" style="left:1537px;top:220px;font-size:14px;line-height:16px;color:#fff;letter-spacing:-.15px">Readability Enhancer</div>
<div class="a" style="left:914px;top:347px;width:769px;height:109px;border:3px solid #960000"></div>
<div class="a nw etx" style="left:922px;top:291px;font-weight:bold;text-decoration:underline">CLINICAL STATUS / COMPLEXITY:</div>
<div class="a nw etx" style="left:922px;top:307px">Recovery is occurring. Improvement is today apparent. John's response to treatment is today minimal. John today</div>
<div class="a nw etx" style="left:922px;top:323px">exhibits a partial treatment response. John is unstable and is having episodes of agitation.</div>
<div class="a nw etx" style="left:922px;top:355px"><span class="hl" style="padding-right:2.8px"><b><u>RECENT HISTORY:</u></b></span></div>
<div class="a nw etx" style="left:922px;top:371px"><span class="hl" style="padding-right:7.6px">He gets dizzy when experiencing anxiety. It is today reported that those choking sensations have worsened in frequency </span></div>
<div class="a nw etx" style="left:922px;top:387px"><span class="hl" style="padding-right:7.6px">or intensity. Preoccupation with loss is a problem. Grief is the primary factor in this feeling of loss. It is today reported that </span></div>
<div class="a nw etx" style="left:922px;top:403px"><span class="hl" style="padding-right:7.6px">preoccupation with loss has lessened in frequency or intensity. John exhibits symptoms of borderline personality </span></div>
<div class="a nw etx" style="left:922px;top:419px"><span class="hl" style="padding-right:7.6px">disorder, characterized by pervasive instability in moods, behavior, and interpersonal relationships. He describes a </span></div>
<div class="a nw etx" style="left:922px;top:435px"><span class="hl" style="padding-right:3.2px">sudden and dramatic shift in his self-image.</span></div>
<div class="a nw etx" style="left:922px;top:467px;font-weight:bold;text-decoration:underline">VERBAL CONTENT OF SESSION:</div>
<div class="a nw etx" style="left:922px;top:483px">The problem of noncompliance was discussed in today's session by John. John discussed his anger issues in today's</div>
<div class="a nw etx" style="left:922px;top:499px">session. John today spoke of his feelings of dependency.</div>
<svg class="a" style="left:1040px;top:350px" width="100" height="80" viewBox="1040 350 100 80"><path d="M1052 371.3L1063.6 371.3L1057.8 376.5Z" fill="#f2604f"/><rect x="1043" y="377" width="30" height="30" rx="3" fill="#f2604f"/><g fill="#fff"><path d="M1060 386Q1061.08 390.92 1066 392Q1061.08 393.08 1060 398Q1058.92 393.08 1054 392Q1058.92 390.92 1060 386Z"/><path d="M1053.6 384.90000000000003Q1054.212 387.688 1057.0 388.3Q1054.212 388.91200000000003 1053.6 391.7Q1052.9879999999998 388.91200000000003 1050.1999999999998 388.3Q1052.9879999999998 387.688 1053.6 384.90000000000003Z"/><path d="M1054 393.0Q1054.684 396.116 1057.8 396.8Q1054.684 397.48400000000004 1054 400.6Q1053.316 397.48400000000004 1050.2 396.8Q1053.316 396.116 1054 393.0Z"/></g><path d="M1136 356L1097 377" stroke="#8e0c0c" stroke-width="3.8" stroke-linecap="butt"/><path d="M1077 387.5L1093 370L1101.5 383.5Z" fill="#8e0c0c"/><g transform="translate(1057 399.5)"><path d="M5.5 1.8C5.5 0.2 8.3 0.2 8.3 1.8V9.2C8.3 8 11 8 11 9.2V10.2C11 9 13.6 9 13.6 10.2V11.2C13.6 10 16.2 10 16.2 11.2V17.2C16.2 20 14.8 22 13.2 22.8H7.6C6 21.8 3.4 17.8 1.3 14.8C0.2 13.2 1.8 11.6 3.4 12.6L5.5 14.6Z" fill="#fff" stroke="#111" stroke-width="1.2" stroke-linejoin="round"/><path d="M8.3 9.2V14M11 10.2V14M13.6 11.2V14" stroke="#111" stroke-width="1"/></g></svg>
<div class="a rp" style="left:1688px;top:206px;width:210px;height:399px">
<div class="a" style="left:0;top:18.6px;width:191px;height:1px;background:#8a8a8a"></div>
<div class="a" style="left:0;top:39.7px;width:191px;height:1px;background:#8a8a8a"></div>
<div class="a" style="left:0;top:60.8px;width:191px;height:1px;background:#8a8a8a"></div>
<div class="a" style="left:0;top:81.9px;width:191px;height:1px;background:#8a8a8a"></div>
<div class="a" style="left:0;top:103.0px;width:191px;height:1px;background:#8a8a8a"></div>
<div class="a" style="left:0;top:124.1px;width:191px;height:1px;background:#8a8a8a"></div>
<div class="a" style="left:0;top:145.2px;width:191px;height:1px;background:#8a8a8a"></div>
<div class="a" style="left:0;top:166.3px;width:191px;height:1px;background:#8a8a8a"></div>
<div class="a" style="left:0;top:187.4px;width:191px;height:1px;background:#8a8a8a"></div>
<div class="a" style="left:0;top:208.5px;width:191px;height:1px;background:#8a8a8a"></div>
<div class="a" style="left:0;top:229.6px;width:191px;height:1px;background:#8a8a8a"></div>
<div class="a" style="left:0;top:250.7px;width:191px;height:1px;background:#8a8a8a"></div>
<div class="a" style="left:0;top:271.8px;width:191px;height:1px;background:#8a8a8a"></div>
<div class="a" style="left:0;top:292.9px;width:191px;height:1px;background:#8a8a8a"></div>
<div class="a" style="left:0;top:314.0px;width:191px;height:1px;background:#8a8a8a"></div>
<div class="a" style="left:0;top:335.1px;width:191px;height:1px;background:#8a8a8a"></div>
<div class="a" style="left:0;top:356.2px;width:191px;height:1px;background:#8a8a8a"></div>
<div class="a" style="left:0;top:377.3px;width:191px;height:1px;background:#8a8a8a"></div>
<div class="a nw" style="left:6px;top:2.0px;font-size:11.5px;font-weight:bold;color:#111;letter-spacing:-.8px;line-height:14px">Therapy note</div>
<div class="a nw" style="left:6px;top:23.1px;font-size:11.5px;font-weight:bold;color:#111;letter-spacing:-.8px;line-height:14px">Therapy note 2</div>
<div class="a" style="left:191px;top:254px;width:17px;height:129px;background:#dcdcdc;border-radius:0 0 5px 0;border-bottom:1px solid #333;border-right:1px solid #888"></div>
<div class="a" style="left:190px;top:0;width:1.4px;height:397px;background:#000"></div>
<div class="a" style="left:191px;top:15px;width:17px;height:1.4px;background:#000"></div>
<div class="a" style="left:191px;top:253px;width:17px;height:1.4px;background:#000"></div>
<svg class="a" style="left:194px;top:3px" width="13" height="8" viewBox="0 0 13 8"><path d="M1.5 7.5L6.5 1.5L11.5 7.5Z" fill="#000"/></svg>
<svg class="a" style="left:194px;top:388px" width="13" height="8" viewBox="0 0 13 8"><path d="M1.5 0.5L6.5 6.5L11.5 0.5Z" fill="#000"/></svg>
</div>
<div class="a cbtn" style="left:1688px;top:610px;width:210px;height:24px"></div>
<svg class="a" style="left:1706px;top:616px" width="12" height="12" viewBox="0 0 12 12"><path d="M6 1V11M1 6H11" stroke="#4a4a4a" stroke-width="1.4"/></svg>
<div class="a nw cbt" style="left:1729px;top:615px;letter-spacing:-.68px">Create Therapy Note Button</div>
<div class="a nw" style="left:913px;top:646px;font-size:14px;line-height:16px;color:#555;letter-spacing:-.09px">Instructions / Recommendations</div>
<div class="a tb" style="left:914px;top:671px;width:769px;height:44px"></div>
<div class="a grp" style="left:921px;top:680px;width:49px;height:25px"><div class="a sep" style="left:24px"></div></div>
<svg class="a" style="left:925px;top:685px" width="18" height="16" viewBox="0 0 18 16"><path d="M2 7.5L8 2.2V5.3C12.5 5.3 15.5 8 15.8 12.8C14.3 10.4 12.2 9.3 8 9.3V12.6Z" fill="#888"/></svg>
<svg class="a" style="left:949px;top:685px" width="18" height="16" viewBox="0 0 18 16"><path d="M16 7.5L10 2.2V5.3C5.5 5.3 2.5 8 2.2 12.8C3.7 10.4 5.8 9.3 10 9.3V12.6Z" fill="#888"/></svg>
<div class="a grp" style="left:977px;top:680px;width:97px;height:25px">
<div class="a sep" style="left:24px"></div>
<div class="a sep" style="left:48px"></div>
<div class="a sep" style="left:72px"></div>
</div>
<div class="a nw" style="left:977px;width:25px;top:685px;text-align:center;font-weight:bold;font-size:15px;line-height:16px;color:#333">B</div>
<div class="a nw" style="left:1002px;width:23px;top:685px;text-align:center;font-family:'Liberation Serif',serif;font-style:italic;font-size:16px;line-height:16px;color:#333">I</div>
<div class="a nw" style="left:1025px;width:25px;top:685px;text-align:center;font-size:14px;line-height:16px;color:#333;text-decoration:underline;text-underline-offset:1.5px">U</div>
<div class="a nw" style="left:1050px;width:24px;top:688px;text-align:center;font-size:10.5px;line-height:12px;color:#444;text-decoration:line-through;letter-spacing:-.3px">abc</div>
<div class="a sel" style="left:1081px;top:678px;width:182px;height:29px"></div>
<div class="a nw" style="left:1089px;top:685px;font-size:14px;line-height:16px;color:#444;letter-spacing:-.25px">Select font size</div>
<svg class="a" style="left:1241px;top:690px" width="16" height="10" viewBox="0 0 16 10"><path d="M1.5 1.5L8 8L14.5 1.5" fill="none" stroke="#333" stroke-width="1.8"/></svg>
<div class="a grp" style="left:1270px;top:680px;width:97px;height:25px">
<div class="a sep" style="left:24px"></div>
<div class="a sep" style="left:48px"></div>
<div class="a sep" style="left:72px"></div>
</div>
<svg class="a" style="left:1274px;top:685px" width="17" height="17" viewBox="0 0 17 17"><g fill="#333"><rect x="5" y="2.4" width="9" height="1.3"/><rect x="5" y="7.4" width="9" height="1.3"/><rect x="5" y="12.4" width="9" height="1.3"/></g><text x="1" y="5.5" font-size="5.5" font-family="Liberation Sans" font-weight="bold" fill="#333">1</text><text x="0.6" y="10.5" font-size="5.5" font-family="Liberation Sans" font-weight="bold" fill="#333">2</text><text x="0.6" y="15.5" font-size="5.5" font-family="Liberation Sans" font-weight="bold" fill="#333">3</text></svg>
<svg class="a" style="left:1298px;top:685px" width="17" height="17" viewBox="0 0 17 17"><g fill="#333"><rect x="5.5" y="2.4" width="9" height="1.3"/><rect x="5.5" y="7.4" width="9" height="1.3"/><rect x="5.5" y="12.4" width="9" height="1.3"/><circle cx="2" cy="3" r="1.3"/><circle cx="2" cy="8" r="1.3"/><circle cx="2" cy="13" r="1.3"/></g></svg>
<svg class="a" style="left:1322px;top:685px" width="17" height="17" viewBox="0 0 17 17"><g fill="#333"><rect x="1.5" y="1.5" width="14" height="1.2"/><rect x="6" y="4.5" width="9.5" height="1.2"/><rect x="6" y="7.5" width="9.5" height="1.2"/><rect x="6" y="10.5" width="9.5" height="1.2"/><rect x="1.5" y="13.5" width="14" height="1.2"/><path d="M1.5 4.3L5 8L1.5 11.5Z"/></g></svg>
<svg class="a" style="left:1346px;top:685px" width="17" height="17" viewBox="0 0 17 17"><g fill="#333"><rect x="1.5" y="1.5" width="14" height="1.2"/><rect x="6" y="4.5" width="9.5" height="1.2"/><rect x="6" y="7.5" width="9.5" height="1.2"/><rect x="6" y="10.5" width="9.5" height="1.2"/><rect x="1.5" y="13.5" width="14" height="1.2"/><path d="M5 4.3L1.5 8L5 11.5Z"/></g></svg>
<div class="a grp" style="left:1374px;top:680px;width:25px;height:25px"></div>
<svg class="a" style="left:1378px;top:685px" width="17" height="17" viewBox="0 0 17 17"><rect x="2" y="2" width="13" height="13" fill="none" stroke="#222" stroke-width="1.7" stroke-dasharray="1 1"/><path d="M7 6L4.5 8.5L7 11M10 6L12.5 8.5L10 11" fill="none" stroke="#444" stroke-width="1.1"/></svg>
<div class="a" style="left:914px;top:715px;width:769px;height:1px;background:#e4e4e4"></div>
<div class="a yel" style="left:914px;top:716px;width:769px;height:138px"></div>
<div class="a rp" style="left:1688px;top:671px;width:210px;height:155px">
<div class="a" style="left:0;top:19.2px;width:191px;height:1px;background:#8a8a8a"></div>
<div class="a" style="left:0;top:40.3px;width:191px;height:1px;background:#8a8a8a"></div>
<div class="a" style="left:0;top:61.4px;width:191px;height:1px;background:#8a8a8a"></div>
<div class="a" style="left:0;top:82.5px;width:191px;height:1px;background:#8a8a8a"></div>
<div class="a" style="left:0;top:103.6px;width:191px;height:1px;background:#8a8a8a"></div>
<div class="a" style="left:0;top:124.7px;width:191px;height:1px;background:#8a8a8a"></div>
<div class="a" style="left:0;top:145.8px;width:191px;height:1px;background:#8a8a8a"></div>
<div class="a nw" style="left:6px;top:2.0px;font-size:11.5px;font-weight:bold;color:#111;letter-spacing:-.8px;line-height:14px">Instructions</div>
<div class="a" style="left:191px;top:46px;width:17px;height:93px;background:#dcdcdc;border-radius:0 0 5px 0;border-bottom:1px solid #333;border-right:1px solid #888"></div>
<div class="a" style="left:190px;top:0;width:1.4px;height:153px;background:#000"></div>
<div class="a" style="left:191px;top:15px;width:17px;height:1.4px;background:#000"></div>
<div class="a" style="left:191px;top:45px;width:17px;height:1.4px;background:#000"></div>
<svg class="a" style="left:194px;top:3px" width="13" height="8" viewBox="0 0 13 8"><path d="M1.5 7.5L6.5 1.5L11.5 7.5Z" fill="#000"/></svg>
<svg class="a" style="left:194px;top:144px" width="13" height="8" viewBox="0 0 13 8"><path d="M1.5 0.5L6.5 6.5L11.5 0.5Z" fill="#000"/></svg>
</div>
<div class="a cbtn" style="left:1688px;top:831px;width:210px;height:24px"></div>
<svg class="a" style="left:1711px;top:837px" width="12" height="12" viewBox="0 0 12 12"><path d="M6 1V11M1 6H11" stroke="#4a4a4a" stroke-width="1.4"/></svg>
<div class="a nw cbt" style="left:1733px;top:836px;letter-spacing:-.69px">Create Instructions Button</div>
<!--/MAIN-->
</body></html>
